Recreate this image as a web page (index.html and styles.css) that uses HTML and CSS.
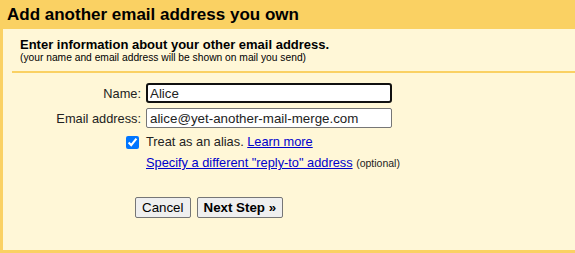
FILE: index.html
```html
<!DOCTYPE html>
<html>
<head>
<meta charset="utf-8">
<link rel="stylesheet" href="styles.css">
</head>
<body>
<div class="dialog">
  <div class="title">Add another email address you own</div>
  <div class="panel">
    <div class="intro">
      <div class="heading">Enter information about your other email address.</div>
      <div class="sub">(your name and email address will be shown on mail you send)</div>
    </div>
    <div class="form">
      <div class="row">
        <label class="lbl">Name:</label>
        <input class="field focused" type="text" value="Alice">
      </div>
      <div class="row">
        <label class="lbl">Email address:</label>
        <input class="field" type="text" value="alice@yet-another-mail-merge.com">
      </div>
      <div class="row check-row">
        <span class="lbl"><input class="cb" type="checkbox" checked></span>
        <span class="txt">Treat as an alias. <a href="#">Learn more</a></span>
      </div>
      <div class="row reply-row">
        <span class="lbl"></span>
        <span class="txt"><a href="#">Specify a different "reply-to" address</a> <span class="opt">(optional)</span></span>
      </div>
      <div class="buttons">
        <button class="btn">Cancel</button>
        <button class="btn bold">Next Step »</button>
      </div>
    </div>
  </div>
</div>
</body>
</html>
```
FILE: styles.css
```css
html, body {
  margin: 0;
  padding: 0;
  background: #fff7d7;
  overflow: hidden;
}
body {
  font-family: "Liberation Sans", Arial, sans-serif;
  color: #222;
}
.dialog {
  width: 575px;
  height: 253px;
  background: #fad163;
  box-sizing: border-box;
  display: flex;
  flex-direction: column;
}
.title {
  height: 29px;
  box-sizing: border-box;
  padding: 5px 0 0 7px;
  font-size: 17px;
  font-weight: bold;
  color: #000;
  line-height: 20px;
}
.panel {
  margin-left: 3px;
  height: 221px;
  background: #fff7d7;
  padding: 0 0 0 9px;
}
.intro {
  padding: 8px 0 7px 8px;
  border-bottom: 2px solid #fad163;
  color: #000;
}
.heading {
  font-size: 13px;
  font-weight: bold;
  line-height: 15px;
}
.sub {
  font-size: 10.25px;
  line-height: 12px;
}
.form {
  padding-top: 10px;
  font-size: 12.8px;
}
.row {
  display: flex;
  align-items: center;
  margin-bottom: 5px;
}
.lbl {
  width: 129px;
  text-align: right;
  padding-right: 5px;
  flex: none;
  color: #222;
}
.field {
  width: 246px;
  height: 20px;
  box-sizing: border-box;
  font-family: "Liberation Sans", Arial, sans-serif;
  font-size: 13.33px;
  color: #222;
  border: 1px solid #767676;
  border-radius: 2px;
  padding: 1px 3px;
  margin: 0;
  background: #fff;
}
.field.focused {
  border: 2px solid #101010;
  border-radius: 3px;
  padding: 0 2px;
}
.check-row {
  margin-top: 6px;
  margin-bottom: 0;
}
.cb {
  width: 13px;
  height: 13px;
  margin: 0 2px 0 0;
  vertical-align: middle;
  accent-color: #0075ff;
}
.txt {
  color: #222;
}
a {
  color: #0000cc;
  text-decoration: underline;
}
.reply-row {
  margin-top: 6px;
}
.opt {
  font-size: 10.5px;
  color: #222;
}
.buttons {
  padding-left: 123px;
  padding-top: 22px;
  display: flex;
  gap: 6px;
}
.btn {
  font-family: "Liberation Sans", Arial, sans-serif;
  font-size: 13.33px;
  height: 21px;
  padding: 0 6px;
  background: #efefef;
  border: 1px solid #767676;
  border-radius: 2px;
  color: #000;
}
.btn.bold {
  font-weight: bold;
}
```
